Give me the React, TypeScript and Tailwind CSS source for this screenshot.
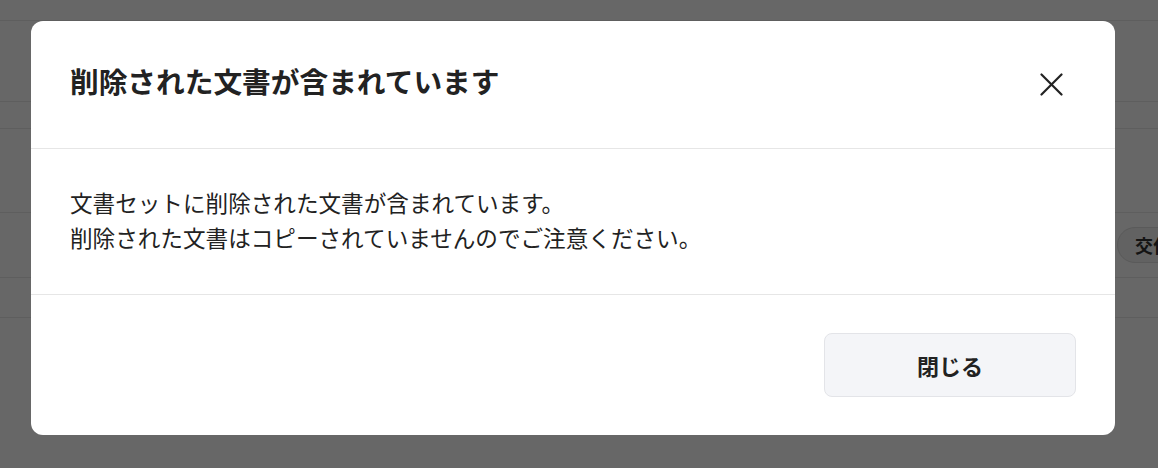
import React from 'react';

const font = { fontFamily: '"Noto Sans CJK JP", "Noto Sans", sans-serif' };

const App = () => {
  return (
    <div className="relative w-[1158px] h-[468px] overflow-hidden bg-[#676767]" style={font}>
      {/* Dimmed page behind the dialog */}
      <div className="flex flex-col">
        <div className="h-[21px] border-b border-[#5e5e5e]"></div>
        <div className="h-[81px] border-b border-[#5e5e5e]"></div>
        <div className="h-[27px] border-b border-[#5e5e5e]"></div>
        <div className="h-[84px] border-b border-[#5e5e5e]"></div>
        <div className="h-[65px] border-b border-[#5e5e5e] flex items-center">
          <div className="ml-[1117px] h-[36px] w-[120px] shrink-0 rounded-full border border-[#5a5a5a] bg-[#626262] flex items-center pl-[17px]">
            <span className="text-[18px] font-bold text-[#141414] whitespace-nowrap">交付</span>
          </div>
        </div>
        <div className="h-[40px] border-b border-[#5e5e5e]"></div>
      </div>

      {/* Dialog */}
      <div className="absolute left-[31px] top-[21px] w-[1084px] rounded-[12px] bg-white flex flex-col">
        {/* Header */}
        <div className="h-[128px] border-b border-[#e6e6e6] flex items-center justify-between pl-[39px] pr-[52px]">
          <h1 className="text-[28.7px] font-bold text-[#222222] leading-none mb-[6px]">削除された文書が含まれています</h1>
          <svg width="23" height="23" viewBox="0 0 23 23" fill="none" stroke="#222222" strokeWidth="2.2" strokeLinecap="round">
            <path d="M1.5 1.5 L21.5 21.5" />
            <path d="M21.5 1.5 L1.5 21.5" />
          </svg>
        </div>

        {/* Body */}
        <div className="h-[146px] border-b border-[#e6e6e6] flex flex-col justify-center pl-[39px] pr-[39px]">
          <p className="text-[22.6px] leading-[35px] text-[#222222] mb-[4px]">
            文書セットに削除された文書が含まれています。
            <br />
            削除された文書はコピーされていませんのでご注意ください。
          </p>
        </div>

        {/* Footer */}
        <div className="h-[140px] flex items-start justify-end pt-[38px] pr-[39px]">
          <button className="w-[252px] h-[64px] rounded-[8px] border border-[#e3e4e8] bg-[#f4f5f8] text-[22px] font-bold text-[#222222]">
            閉じる
          </button>
        </div>
      </div>
    </div>
  );
};

export default App;
